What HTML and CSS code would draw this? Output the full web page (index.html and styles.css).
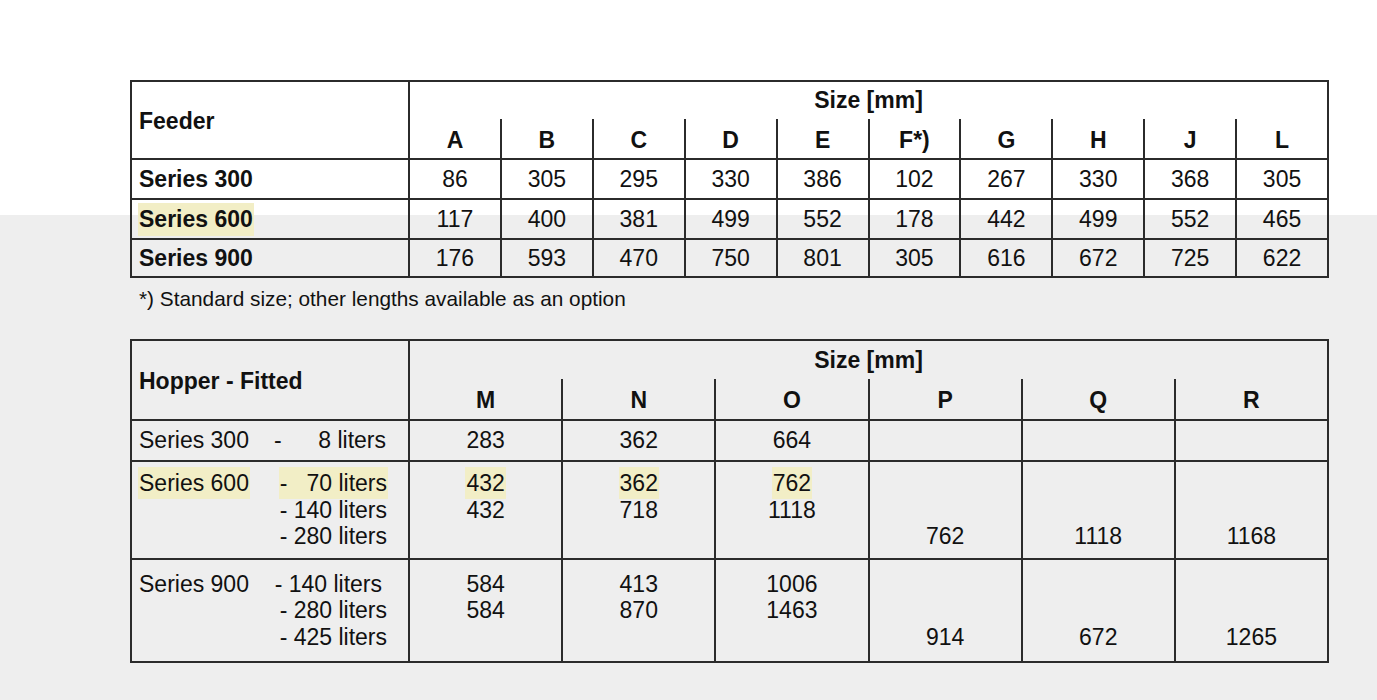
FILE: index.html
```html
<!DOCTYPE html>
<html lang="en">
<head>
<meta charset="utf-8">
<title>Feeder and Hopper sizes</title>
<link rel="stylesheet" href="styles.css">
</head>
<body>
<main class="page">
  <section class="spec feeder">
    <div class="c corner">Feeder</div>
    <div class="c size">Size [mm]</div>
    <div class="c letter">A</div>
    <div class="c letter">B</div>
    <div class="c letter">C</div>
    <div class="c letter">D</div>
    <div class="c letter">E</div>
    <div class="c letter">F*)</div>
    <div class="c letter">G</div>
    <div class="c letter">H</div>
    <div class="c letter">J</div>
    <div class="c letter">L</div>

    <div class="c label">Series 300</div>
    <div class="c num">86</div><div class="c num">305</div><div class="c num">295</div><div class="c num">330</div><div class="c num">386</div><div class="c num">102</div><div class="c num">267</div><div class="c num">330</div><div class="c num">368</div><div class="c num">305</div>

    <div class="c label"><span class="hl">Series 600</span></div>
    <div class="c num">117</div><div class="c num">400</div><div class="c num">381</div><div class="c num">499</div><div class="c num">552</div><div class="c num">178</div><div class="c num">442</div><div class="c num">499</div><div class="c num">552</div><div class="c num">465</div>

    <div class="c label">Series 900</div>
    <div class="c num">176</div><div class="c num">593</div><div class="c num">470</div><div class="c num">750</div><div class="c num">801</div><div class="c num">305</div><div class="c num">616</div><div class="c num">672</div><div class="c num">725</div><div class="c num">622</div>
  </section>

  <p class="note">*) Standard size; other lengths available as an option</p>

  <section class="spec hopper">
    <div class="c corner">Hopper - Fitted</div>
    <div class="c size">Size [mm]</div>
    <div class="c letter">M</div>
    <div class="c letter">N</div>
    <div class="c letter">O</div>
    <div class="c letter">P</div>
    <div class="c letter">Q</div>
    <div class="c letter">R</div>

    <div class="c label">
      <div class="inner">
        <div class="ln">Series 300</div>
        <div class="liters">
          <div class="ln split wide"><span>-</span><span>8 liters</span></div>
        </div>
      </div>
    </div>
    <div class="c num"><div class="ln">283</div></div>
    <div class="c num"><div class="ln">362</div></div>
    <div class="c num"><div class="ln">664</div></div>
    <div class="c num"></div>
    <div class="c num"></div>
    <div class="c num"></div>

    <div class="c label">
      <div class="inner">
        <div class="ln"><span class="hl">Series 600</span></div>
        <div class="liters">
          <div class="ln"><span class="hl pre">-   70 liters</span></div>
          <div class="ln">- 140 liters</div>
          <div class="ln">- 280 liters</div>
        </div>
      </div>
    </div>
    <div class="c num"><div class="stack"><div class="ln"><span class="hl">432</span></div><div class="ln">432</div><div class="ln"></div></div></div>
    <div class="c num"><div class="stack"><div class="ln"><span class="hl">362</span></div><div class="ln">718</div><div class="ln"></div></div></div>
    <div class="c num"><div class="stack"><div class="ln"><span class="hl">762</span></div><div class="ln">1118</div><div class="ln"></div></div></div>
    <div class="c num"><div class="stack"><div class="ln"></div><div class="ln"></div><div class="ln">762</div></div></div>
    <div class="c num"><div class="stack"><div class="ln"></div><div class="ln"></div><div class="ln">1118</div></div></div>
    <div class="c num"><div class="stack"><div class="ln"></div><div class="ln"></div><div class="ln">1168</div></div></div>

    <div class="c label">
      <div class="inner">
        <div class="ln">Series 900</div>
        <div class="liters">
          <div class="ln shift">- 140 liters</div>
          <div class="ln">- 280 liters</div>
          <div class="ln">- 425 liters</div>
        </div>
      </div>
    </div>
    <div class="c num"><div class="stack"><div class="ln">584</div><div class="ln">584</div><div class="ln"></div></div></div>
    <div class="c num"><div class="stack"><div class="ln">413</div><div class="ln">870</div><div class="ln"></div></div></div>
    <div class="c num"><div class="stack"><div class="ln">1006</div><div class="ln">1463</div><div class="ln"></div></div></div>
    <div class="c num"><div class="stack"><div class="ln"></div><div class="ln"></div><div class="ln">914</div></div></div>
    <div class="c num"><div class="stack"><div class="ln"></div><div class="ln"></div><div class="ln">672</div></div></div>
    <div class="c num"><div class="stack"><div class="ln"></div><div class="ln"></div><div class="ln">1265</div></div></div>
  </section>
</main>
</body>
</html>
```

FILE: styles.css
```css
html {
  background-color: #eeeeee;
  background-image: linear-gradient(#ffffff, #ffffff);
  background-size: 100% 215px;
  background-repeat: no-repeat;
}

body {
  margin: 0;
  font-family: "Liberation Sans", Arial, sans-serif;
  color: #111111;
}

.page {
  padding: 80px 0 0 130px;
}

.spec {
  box-sizing: border-box;
  width: 1199px;
  border: 2px solid #2b2b2b;
  display: grid;
  font-size: 23px;
}

.feeder {
  grid-template-columns: 276px repeat(10, 1fr);
  grid-template-rows: 37px 39px 40px 40px 38px;
}

.hopper {
  grid-template-columns: 276px repeat(6, 1fr);
  grid-template-rows: 38px 40px 41px 98px 103px;
}

.c {
  box-sizing: border-box;
  display: flex;
  align-items: center;
  min-width: 0;
}

.corner {
  grid-row: span 2;
  font-weight: bold;
  padding: 2px 0 0 7px;
}

.size {
  grid-column: 2 / -1;
  justify-content: center;
  font-weight: bold;
  border-left: 2px solid #2b2b2b;
}

.letter {
  justify-content: center;
  font-weight: bold;
  border-left: 2px solid #2b2b2b;
  padding-top: 3px;
}

.hopper .letter {
  padding-top: 2px;
}

.label {
  border-top: 2px solid #2b2b2b;
  padding: 0 21px 0 7px;
}

.feeder .label {
  font-weight: bold;
}

.num {
  justify-content: center;
  border-left: 2px solid #2b2b2b;
  border-top: 2px solid #2b2b2b;
}

.inner {
  display: flex;
  justify-content: space-between;
  align-items: flex-start;
  width: 100%;
}

.liters {
  text-align: right;
}

.ln {
  height: 26.5px;
  line-height: 26.5px;
  white-space: nowrap;
}

.stack {
  text-align: center;
}

.split {
  display: flex;
  justify-content: space-between;
}

.split.wide {
  width: 112px;
  margin-right: 1px;
}

.shift {
  margin-right: 5px;
}

.pre {
  white-space: pre;
}

.hl {
  background: #f2eec6;
  padding: 3px 1px;
  margin: 0 -1px;
}

.note {
  margin: 9px 0 28px 9px;
  font-size: 20.8px;
  line-height: 24px;
}
```
